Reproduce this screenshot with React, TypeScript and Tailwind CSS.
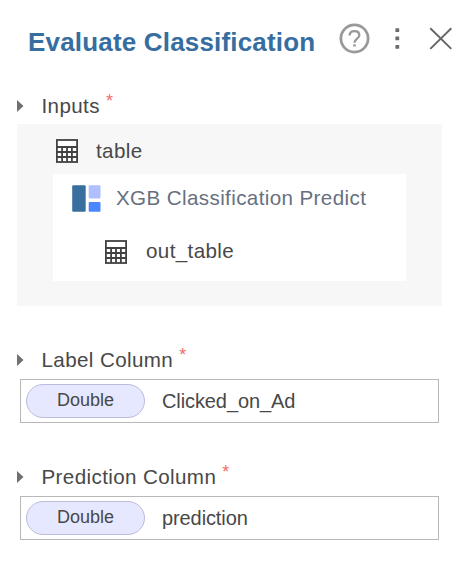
import type { ReactNode } from "react";

const COLUMNS: { label: string; type: string; value: string }[] = [
  { label: "Label Column", type: "Double", value: "Clicked_on_Ad" },
  { label: "Prediction Column", type: "Double", value: "prediction" },
];

function TableIcon() {
  return (
    <svg width="22" height="24" viewBox="0 0 22 24" fill="none" stroke="#424242" aria-hidden>
      <rect x="0.9" y="1" width="20.2" height="22" fill="#fff" strokeWidth="1.8" />
      <path
        d="M1 8h20M1 13h20M1 18h20M6.1 8v15M11 8v15M15.9 8v15"
        strokeWidth="1.8"
      />
    </svg>
  );
}

function NodeIcon() {
  return (
    <svg width="29" height="27" viewBox="0 0 29 27" aria-hidden>
      <rect x="0.2" y="0.2" width="13.5" height="26.6" rx="1.2" fill="#386f9f" />
      <rect x="16.7" y="0.2" width="11.8" height="13.2" rx="1" fill="#b0c0ff" />
      <rect x="16.7" y="17" width="11.8" height="9.8" rx="1" fill="#4a86ff" />
    </svg>
  );
}

function FieldLabel({ children }: { children: ReactNode }) {
  return (
    <div className="flex h-6 items-center text-[20.6px] leading-6 tracking-[0.38px]">
      <svg width="7" height="12" viewBox="0 0 7 12" fill="#707070" aria-hidden>
        <path d="M0 0l6.5 6L0 12z" />
      </svg>
      <span className="ml-[17.5px]">{children}</span>
      <span className="-mt-0.5 ml-1.5 self-start text-[18px] leading-[18px] text-[#f26d6d]">*</span>
    </div>
  );
}

export default function App() {
  return (
    <main className="h-[564px] w-[469px] overflow-hidden bg-white pl-[17px] font-['Liberation_Sans',Arial,sans-serif] text-[#484848]">
      <header className="flex h-[94px] items-start pl-[11px] pt-[23px]">
        <h1 className="mt-1 whitespace-nowrap text-[26px] font-bold leading-[30px] tracking-[0.18px] text-[#366e9f]">
          Evaluate Classification
        </h1>
        <div className="ml-auto flex pr-4">
          <svg width="31" height="31" viewBox="0 0 31 31" fill="none" stroke="#999" aria-label="Help">
            <circle cx="15.5" cy="15.5" r="13.6" strokeWidth="2.8" />
            <path
              d="M10.6 12.6c0-2.8 1.9-4.5 4.9-4.5s4.8 1.7 4.8 4.1c0 3.5-4.8 3.4-4.8 7.6"
              strokeWidth="2.3"
            />
            <path d="M15.5 21.3v2.2" strokeWidth="2.6" />
          </svg>
          <svg className="ml-[24px]" width="6" height="31" viewBox="0 0 6 31" fill="#6b6b6b" aria-label="More">
            <rect x="1.4" y="5.2" width="3.8" height="3.8" rx="0.6" />
            <rect x="1.4" y="13.5" width="3.8" height="3.8" rx="0.6" />
            <rect x="1.4" y="22" width="3.8" height="3.8" rx="0.6" />
          </svg>
          <svg className="ml-[29px]" width="24" height="31" viewBox="0 0 24 31" stroke="#666" strokeWidth="1.9" aria-label="Close">
            <path d="M1.3 5.3l21 20.6M22.3 5.3L1.3 25.9" />
          </svg>
        </div>
      </header>

      {/* Inputs */}
      <FieldLabel>Inputs</FieldLabel>
      <section className="mt-1.5 h-[182px] w-[425px] bg-[#f7f7f7] pl-9 text-[20.6px] leading-6 tracking-[0.38px]">
        <div className="flex h-[50px] items-center gap-[18px] pl-[3px] pt-1">
          <TableIcon />
          <span>table</span>
        </div>
        <div className="h-[107px] w-[353px] bg-white">
          <div className="flex h-[49px] items-center gap-[14px] pl-[19px] text-[#687080]">
            <NodeIcon />
            <span className="whitespace-nowrap pb-0.5 pl-px">XGB Classification Predict</span>
          </div>
          <div className="flex h-[58px] items-center gap-[18px] pl-[52px]">
            <TableIcon />
            <span className="pb-0.5 pl-px">out_table</span>
          </div>
        </div>
      </section>

      {/* Column pickers */}
      <div className="mt-[42px] flex flex-col gap-[42px]">
        {COLUMNS.map((c) => (
          <div key={c.label}>
            <FieldLabel>{c.label}</FieldLabel>
            <div className="ml-[3px] mt-[7px] flex h-11 w-[419px] items-center border border-[#b8b8b8] px-[5px]">
              <span className="flex h-[34px] w-[119px] items-center justify-center rounded-full border border-[#bcbcdc] bg-[#e6e8ff] pb-0.5 text-[18px]">
                {c.type}
              </span>
              <span className="ml-[17px] text-[20px] tracking-[-0.1px]">{c.value}</span>
            </div>
          </div>
        ))}
      </div>
    </main>
  );
}
